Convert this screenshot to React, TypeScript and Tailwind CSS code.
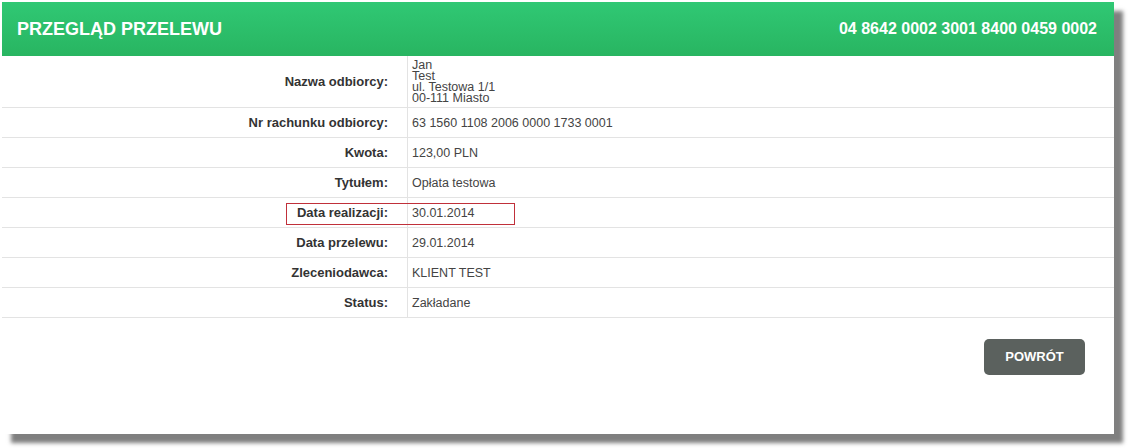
const rows: { label: string; value: string[] }[] = [
  { label: "Nazwa odbiorcy:", value: ["Jan", "Test", "ul. Testowa 1/1", "00-111 Miasto"] },
  { label: "Nr rachunku odbiorcy:", value: ["63 1560 1108 2006 0000 1733 0001"] },
  { label: "Kwota:", value: ["123,00 PLN"] },
  { label: "Tytułem:", value: ["Opłata testowa"] },
  { label: "Data realizacji:", value: ["30.01.2014"] },
  { label: "Data przelewu:", value: ["29.01.2014"] },
  { label: "Zleceniodawca:", value: ["KLIENT TEST"] },
  { label: "Status:", value: ["Zakładane"] },
];

export default function App() {
  return (
    <div className="h-[448px] w-[1128px] bg-white p-[2px] font-['Liberation_Sans',Arial,sans-serif]">
      <div className="flex h-[432px] w-[1112px] flex-col bg-white shadow-[9px_9px_4px_rgba(0,0,0,0.5)]">
        <div className="flex h-[54px] items-center justify-between bg-gradient-to-b from-[#30c874] to-[#28b561] pl-[15px] pr-[17px] font-bold text-white">
          <span className="text-[18px]">PRZEGLĄD PRZELEWU</span>
          <span className="text-[16px]">04 8642 0002 3001 8400 0459 0002</span>
        </div>

        <div className="flex flex-col">
          {rows.map((row, i) => (
            <div
              key={row.label}
              className={`relative flex border-b border-[#e3e3e3] ${i === 0 ? "h-[52px]" : "h-[30px]"}`}
            >
              <div className="flex w-[406px] shrink-0 items-center justify-end border-r border-[#e3e3e3] pr-[19px] pt-[1px] text-[13px] font-bold text-[#333]">
                {row.label}
              </div>
              <div className="flex flex-col justify-center pl-[4px] pt-[1px] text-[12.5px] text-[#444]">
                {row.value.map((line) => (
                  <span key={line} className={row.value.length > 1 ? "leading-[11px]" : "leading-[15px]"}>
                    {line}
                  </span>
                ))}
              </div>
              {row.label === "Data realizacji:" && (
                <div className="absolute left-[284px] top-[5px] h-[22px] w-[229px] border border-[#c0303a]" />
              )}
            </div>
          ))}
        </div>

        <div className="flex justify-end pr-[29px] pt-[21px]">
          <button
            type="button"
            className="h-[36px] w-[101px] rounded-[5px] bg-[#5b615e] text-[13px] font-bold text-white"
          >
            POWRÓT
          </button>
        </div>
      </div>
    </div>
  );
}
